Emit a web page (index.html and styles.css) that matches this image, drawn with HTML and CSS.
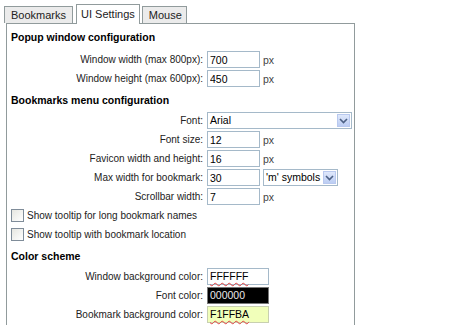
FILE: index.html
```html
<!DOCTYPE html>
<html>
<head>
<meta charset="utf-8">
<link rel="stylesheet" href="styles.css">
</head>
<body>
<div class="tabs">
  <div class="tab t-bookmarks">Bookmarks</div>
  <div class="tab active">UI Settings</div>
  <div class="tab t-mouse">Mouse</div>
</div>
<div class="panel">
  <div class="heading first">Popup window configuration</div>
  <div class="form">
    <label class="lbl">Window width (max 800px):</label>
    <div class="ctl"><input class="num" value="700"><span class="unit">px</span></div>
    <label class="lbl">Window height (max 600px):</label>
    <div class="ctl"><input class="num" value="450"><span class="unit">px</span></div>
  </div>

  <div class="heading">Bookmarks menu configuration</div>
  <div class="form">
    <label class="lbl">Font:</label>
    <div class="ctl"><div class="select wide"><span class="sel-text">Arial</span><span class="sel-btn"><svg width="9" height="6" viewBox="0 0 9 6"><path d="M1 1 L4.5 4.5 L8 1" fill="none" stroke="#4d6185" stroke-width="1.6"/></svg></span></div></div>
    <label class="lbl">Font size:</label>
    <div class="ctl"><input class="num" value="12"><span class="unit">px</span></div>
    <label class="lbl">Favicon width and height:</label>
    <div class="ctl"><input class="num" value="16"><span class="unit">px</span></div>
    <label class="lbl">Max width for bookmark:</label>
    <div class="ctl"><input class="num" value="30"><div class="select narrow"><span class="sel-text">'m' symbols</span><span class="sel-btn"><svg width="9" height="6" viewBox="0 0 9 6"><path d="M1 1 L4.5 4.5 L8 1" fill="none" stroke="#4d6185" stroke-width="1.6"/></svg></span></div></div>
    <label class="lbl">Scrollbar width:</label>
    <div class="ctl"><input class="num" value="7"><span class="unit">px</span></div>
  </div>

  <label class="check"><span class="box"></span>Show tooltip for long bookmark names</label>
  <label class="check"><span class="box"></span>Show tooltip with bookmark location</label>

  <div class="heading">Color scheme</div>
  <div class="form">
    <label class="lbl">Window background color:</label>
    <div class="ctl"><span class="color c-white"><span class="spell">FFFFFF</span></span></div>
    <label class="lbl">Font color:</label>
    <div class="ctl"><span class="color c-black">000000</span></div>
    <label class="lbl">Bookmark background color:</label>
    <div class="ctl"><span class="color c-yellow"><span class="spell">F1FFBA</span></span></div>
  </div>
</div>
</body>
</html>
```
FILE: styles.css
```css
html, body {
  margin: 0;
  background: #fff;
}
body {
  padding: 4px 0 0 4px;
  font: 10px "Liberation Sans", Arial, sans-serif;
  color: #000;
}
.tabs {
  display: flex;
  align-items: flex-end;
  height: 19px;
  position: relative;
  z-index: 1;
  font-size: 11px;
}
.tab {
  box-sizing: border-box;
  height: 17px;
  line-height: 16px;
  padding: 0 6px;
  border: 1px solid #919b9c;
  border-bottom: none;
  background: #ebebeb;
  color: #222;
}
.t-bookmarks {
  margin-right: 3px;
}
.tab.active {
  height: 20px;
  line-height: 19px;
  background: #fff;
  margin-bottom: -1px;
  margin-right: 2px;
  padding: 0 4px;
}
.t-mouse {
  padding: 0 4px 0 6px;
}
.panel {
  box-sizing: border-box;
  margin-left: 2px;
  width: 349px;
  height: 400px;
  border: 1px solid #919b9c;
  border-bottom: none;
  padding-top: 4px;
}
.heading {
  font-weight: bold;
  font-size: 10.5px;
  line-height: 18px;
  padding-left: 4px;
  margin-top: 3px;
  margin-bottom: 2px;
}
.heading.first {
  margin-top: 0;
  margin-bottom: 4px;
}
.form {
  display: grid;
  grid-template-columns: 200px 1fr;
  grid-auto-rows: 19px;
}
.lbl {
  text-align: right;
  padding-right: 4px;
  line-height: 19px;
  color: #222;
}
.ctl {
  display: flex;
  align-items: center;
  gap: 3px;
}
.num {
  box-sizing: border-box;
  width: 53px;
  height: 17px;
  margin: 0;
  padding: 0 2px;
  border: 1px solid #a5b9c9;
  font: 10.5px "Liberation Sans", Arial, sans-serif;
  color: #000;
  outline: none;
}
.unit {
  color: #444;
  font-size: 10.5px;
}
.select {
  box-sizing: border-box;
  height: 17px;
  border: 1px solid #a5b9c9;
  display: flex;
  align-items: stretch;
  background: #fff;
  font-size: 10.5px;
}
.select.wide { width: 145px; }
.select.narrow { width: 75px; }
.sel-text {
  flex: 1;
  padding-left: 2px;
  line-height: 15px;
  white-space: nowrap;
  overflow: hidden;
}
.sel-btn {
  width: 13px;
  flex: none;
  margin: 1px;
  box-sizing: border-box;
  background: linear-gradient(#dfe8fb, #bccdf3);
  border: 1px solid #b9c9ef;
  display: flex;
  align-items: center;
  justify-content: center;
}
.check {
  display: flex;
  align-items: center;
  height: 19px;
  padding-left: 4px;
  color: #222;
  font-size: 10px;
}
.box {
  box-sizing: border-box;
  width: 13px;
  height: 13px;
  border: 1px solid #7f8c99;
  background: linear-gradient(135deg, #e6e6e0, #fff);
  margin-right: 3px;
}
.color {
  box-sizing: border-box;
  width: 62px;
  height: 17px;
  line-height: 15px;
  padding: 0 2px;
  border: 1px solid #a5b9c9;
  font-size: 10.5px;
}
.c-white { background: #fff; }
.c-black { background: #000; color: #e8e8e8; border-color: #777; }
.c-yellow { background: #f1ffba; border-color: #c8d0b0; }
.spell {
  text-decoration: underline wavy #e04040;
  text-decoration-thickness: 1px;
  text-underline-offset: 2px;
}
```
